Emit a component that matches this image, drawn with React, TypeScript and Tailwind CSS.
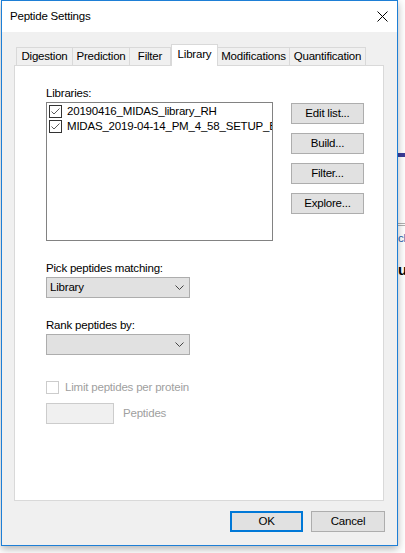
import React from "react";

const tabs = [
  { name: "Digestion", w: "w-[57px]" },
  { name: "Prediction", w: "w-[58px] -ml-px" },
  { name: "Filter", w: "w-[42px] -ml-px" },
  { name: "Library", w: "w-[47px]", active: true },
  { name: "Modifications", w: "w-[73px] -ml-px" },
  { name: "Quantification", w: "w-[77px] -ml-px" },
];

const libraries = ["20190416_MIDAS_library_RH", "MIDAS_2019-04-14_PM_4_58_SETUP_Bo"];

function Check() {
  return (
    <span className="w-[13px] h-[13px] border border-[#333333] bg-white flex items-center justify-center shrink-0">
      <svg width="11" height="11" viewBox="0 0 11 11">
        <polyline points="1.5,5.5 4,8 9.5,2.5" fill="none" stroke="#5a5a5a" strokeWidth="1" />
      </svg>
    </span>
  );
}

function Chevron() {
  return (
    <svg width="9" height="5" viewBox="0 0 9 5" className="shrink-0">
      <polyline points="0.5,0.5 4.5,4.5 8.5,0.5" fill="none" stroke="#444444" strokeWidth="1" />
    </svg>
  );
}

function Combo({ value }: { value: string }) {
  return (
    <div className="w-[144px] h-[21px] border border-[#adadad] bg-[#e1e1e1] flex items-center pl-[3px] pr-[5px]">
      <span className="flex-1">{value}</span>
      <Chevron />
    </div>
  );
}

function SideButton({ label }: { label: string }) {
  return (
    <div className="w-[73px] h-[21px] border border-[#adadad] bg-[#e1e1e1] flex items-center justify-center">
      {label}
    </div>
  );
}

export default function App() {
  return (
    <div
      className="w-[405px] h-[553px] bg-white overflow-hidden flex text-[11.5px] leading-[15px] tracking-[-0.2px] text-black"
      style={{ fontFamily: '"Segoe UI", "Liberation Sans", Arial, sans-serif' }}
    >
      <div className="w-px" />
      {/* dialog window */}
      <div className="w-[397px] h-[546px] border border-[#1e7fd6] bg-[#f0f0f0] flex flex-col shadow-[0_3px_8px_rgba(0,0,0,0.3)] z-10">
        <div className="h-[31px] bg-white flex items-center pl-[8px] pr-[8px] shrink-0">
          <span className="flex-1">Peptide Settings</span>
          <svg width="11" height="11" viewBox="0 0 11 11" className="mr-[1px]">
            <line x1="0.5" y1="0.5" x2="10.5" y2="10.5" stroke="#000" strokeWidth="1" />
            <line x1="10.5" y1="0.5" x2="0.5" y2="10.5" stroke="#000" strokeWidth="1" />
          </svg>
        </div>

        <div className="flex-1 flex flex-col pt-[12px] pl-[12px] pr-[12px]">
          {/* tabs */}
          <div className="h-[21px] flex items-end pl-[2px] mr-px">
            {tabs.map((t) =>
              t.active ? (
                <div
                  key={t.name}
                  className={`${t.w} h-[22px] -mb-px z-10 bg-white border-t border-l border-r border-[#d9d9d9] flex items-center justify-center pb-[2px]`}
                >
                  {t.name}
                </div>
              ) : (
                <div
                  key={t.name}
                  className={`${t.w} h-[18px] bg-[#f0f0f0] border-t border-l border-r border-[#d9d9d9] flex items-center justify-center`}
                >
                  {t.name}
                </div>
              )
            )}
          </div>

          {/* tab page */}
          <div className="h-[436px] mr-px border border-[#d9d9d9] bg-white flex flex-col pl-[31px] pt-[20px]">
            <div>Libraries:</div>
            <div className="flex mt-px">
              <div className="w-[227px] h-[139px] border border-[#828282] bg-white overflow-hidden pt-[1px] pl-[2px]">
                {libraries.map((lib) => (
                  <div key={lib} className="h-[15px] flex items-center gap-[5px] whitespace-nowrap">
                    <Check />
                    <span>{lib}</span>
                  </div>
                ))}
              </div>
              <div className="ml-[18px] mt-px flex flex-col gap-[9px]">
                <SideButton label="Edit list..." />
                <SideButton label="Build..." />
                <SideButton label="Filter..." />
                <SideButton label="Explore..." />
              </div>
            </div>

            <div className="mt-[20px]">Pick peptides matching:</div>
            <div className="mt-px">
              <Combo value="Library" />
            </div>

            <div className="mt-[20px]">Rank peptides by:</div>
            <div className="mt-px">
              <Combo value="" />
            </div>

            <div className="mt-[25px] h-[15px] flex items-center gap-[6px] text-[#a0a0a0]">
              <span className="w-[13px] h-[13px] border border-[#cccccc] bg-white shrink-0" />
              <span>Limit peptides per protein</span>
            </div>
            <div className="mt-[8px] flex items-center">
              <div className="w-[68px] h-[21px] border border-[#cccccc] bg-[#f0f0f0]" />
              <span className="ml-[9px] text-[#a0a0a0]">Peptides</span>
            </div>
          </div>

          {/* footer */}
          <div className="mt-[10px] flex justify-end gap-[8px]">
            <div className="w-[73px] h-[21px] border-2 border-[#0078d7] bg-[#e1e1e1] flex items-center justify-center">
              OK
            </div>
            <div className="w-[74px] h-[21px] border border-[#adadad] bg-[#e1e1e1] flex items-center justify-center">
              Cancel
            </div>
          </div>
        </div>
      </div>

      {/* application behind the dialog */}
      <div className="w-[7px] flex flex-col overflow-hidden">
        <div className="h-[153px] shrink-0" />
        <div className="h-[4px] bg-[#3b3c98] shrink-0" />
        <div className="h-[66px] shrink-0" />
        <div className="h-[3px] border-t border-b border-[#b0b0b0] shrink-0" />
        <div className="mt-[6px] whitespace-nowrap text-[#1f5fae] leading-[13px]">ch</div>
        <div className="mt-[18px] whitespace-nowrap font-bold text-[15px] leading-[14px]">u</div>
      </div>
    </div>
  );
}
